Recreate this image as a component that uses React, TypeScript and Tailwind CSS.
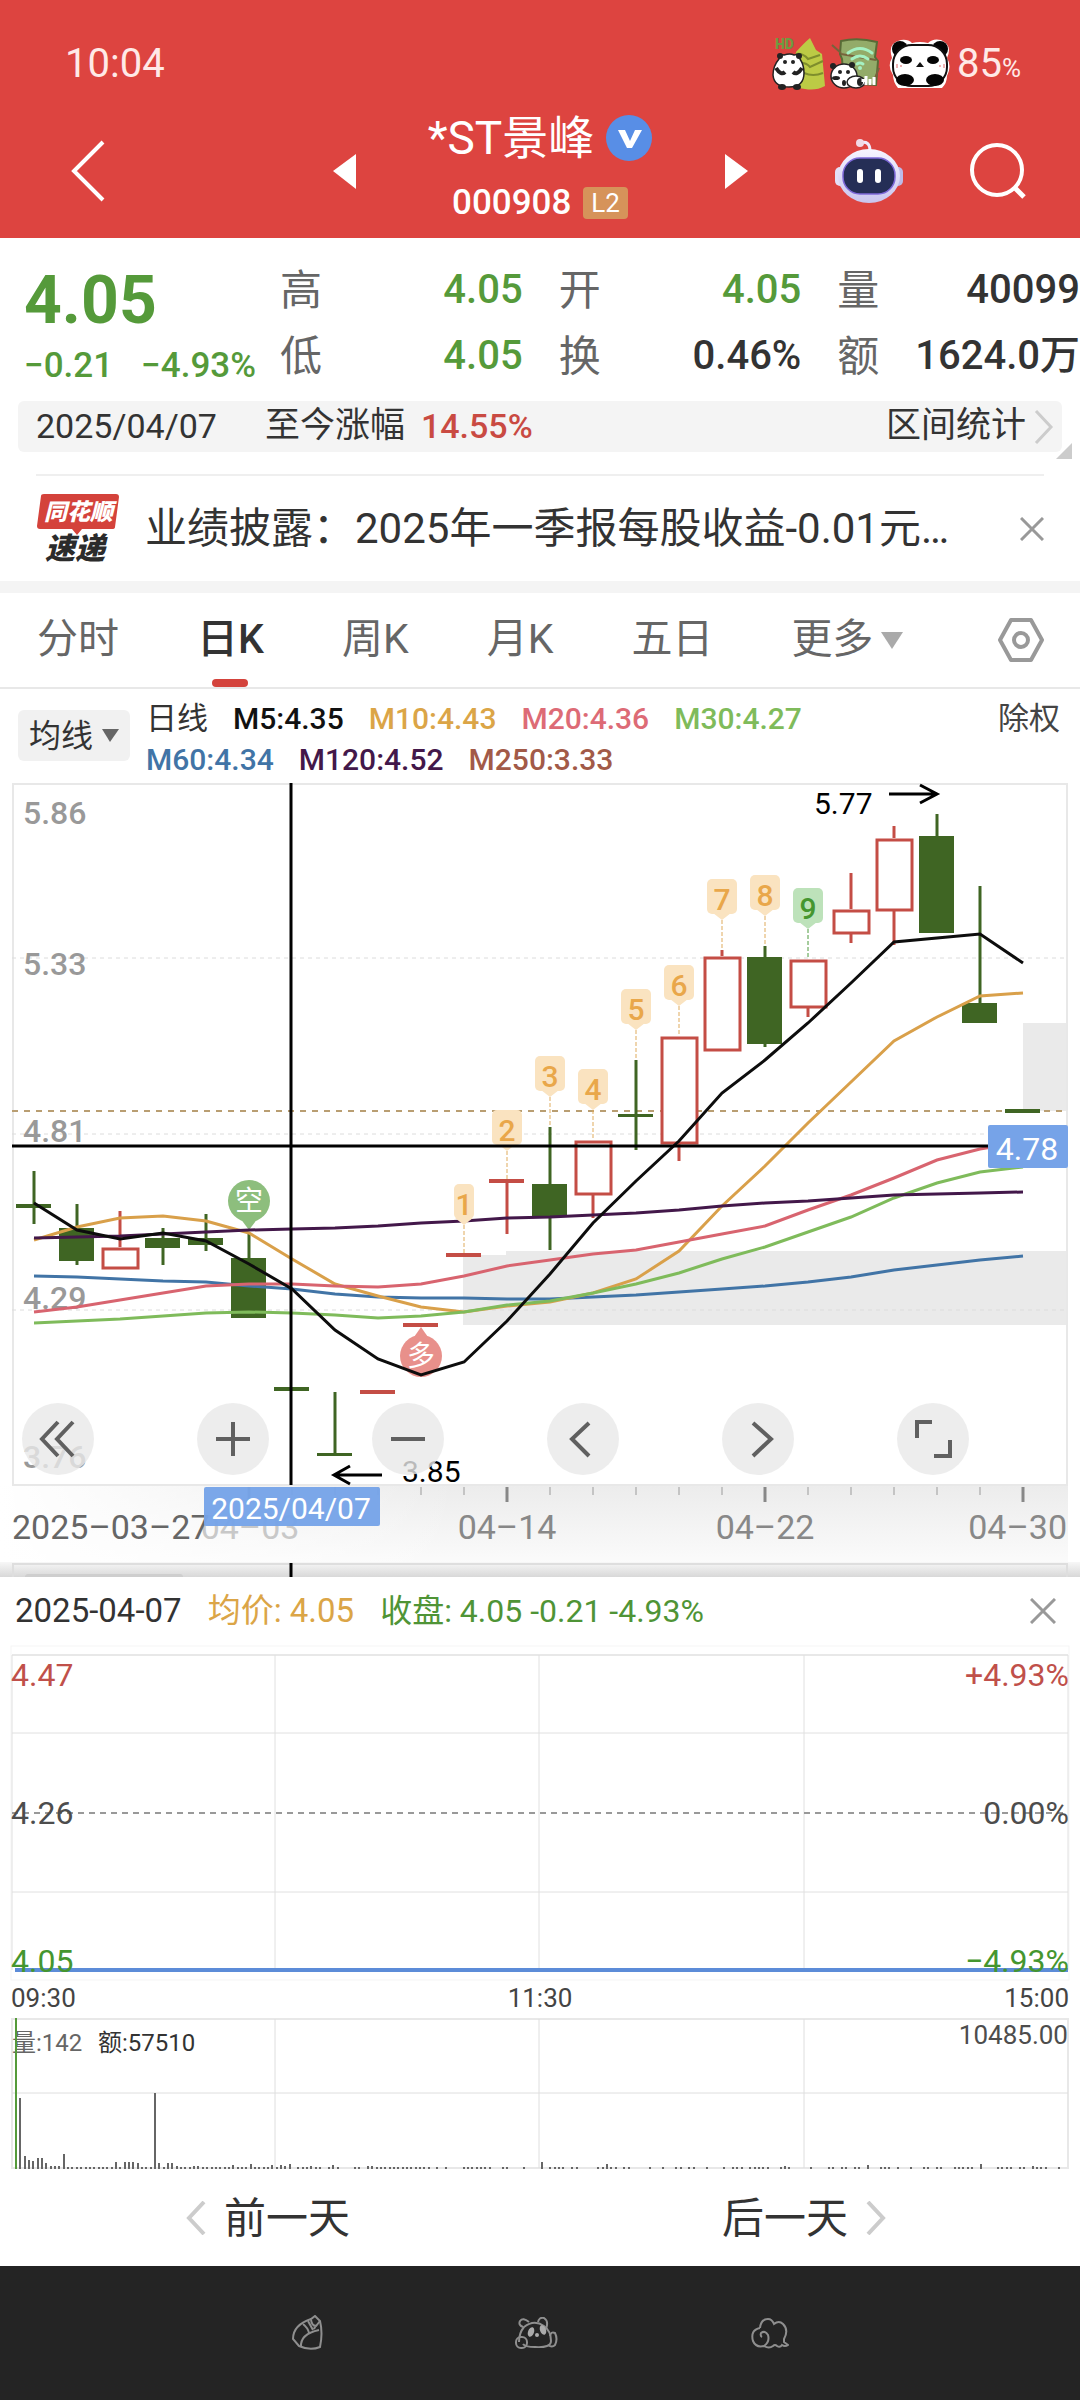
import { useState } from "react";

const candleX = (i: number) => 34 + Math.round(i * 43.02);

type Candle = { type: "down" | "up"; top: number; bottom: number; high?: number; low?: number };

const candles: Candle[] = [
  { type: "down", top: 1204, bottom: 1208, high: 1171, low: 1224 },
  { type: "down", top: 1228, bottom: 1261, high: 1204, low: 1265 },
  { type: "up", top: 1247, bottom: 1269, high: 1211 },
  { type: "down", top: 1238, bottom: 1248, high: 1228, low: 1265 },
  { type: "down", top: 1238, bottom: 1245, high: 1214, low: 1251 },
  { type: "down", top: 1258, bottom: 1318, high: 1233 },
  { type: "down", top: 1387, bottom: 1391 },
  { type: "down", top: 1453, bottom: 1456, high: 1392 },
  { type: "up", top: 1390, bottom: 1394 },
  { type: "up", top: 1323, bottom: 1327 },
  { type: "up", top: 1253, bottom: 1257 },
  { type: "up", top: 1179, bottom: 1183, low: 1234 },
  { type: "down", top: 1184, bottom: 1217, high: 1127, low: 1250 },
  { type: "up", top: 1140, bottom: 1195, low: 1218 },
  { type: "down", top: 1114, bottom: 1117, high: 1060, low: 1150 },
  { type: "up", top: 1036, bottom: 1144, low: 1161 },
  { type: "up", top: 956, bottom: 1051, high: 950 },
  { type: "down", top: 957, bottom: 1044, high: 946, low: 1047 },
  { type: "up", top: 959, bottom: 1008, low: 1017 },
  { type: "up", top: 909, bottom: 934, high: 873, low: 943 },
  { type: "up", top: 838, bottom: 911, high: 826, low: 945 },
  { type: "down", top: 836, bottom: 933, high: 814 },
  { type: "down", top: 1003, bottom: 1023, high: 886 },
  { type: "down", top: 1109, bottom: 1113 },
];

const averages = [
  {
    color: "#4174a6",
    values: [1276, 1277, 1279, 1281, 1282, 1286, 1289, 1294, 1297, 1298, 1298, 1299, 1299, 1297, 1295, 1292, 1289, 1286, 1282, 1277, 1270, 1265, 1260, 1256],
  },
  {
    color: "#d9a04a",
    values: [1240, 1227, 1218, 1216, 1221, 1233, 1259, 1284, 1296, 1307, 1312, 1306, 1302, 1293, 1279, 1251, 1206, 1166, 1123, 1082, 1041, 1017, 996, 993],
  },
  {
    color: "#d8646f",
    values: [1312, 1307, 1300, 1293, 1286, 1284, 1284, 1286, 1287, 1284, 1276, 1266, 1260, 1254, 1250, 1242, 1234, 1226, 1210, 1195, 1178, 1160, 1149, 1142],
  },
  {
    color: "#7fbb5b",
    values: [1323, 1321, 1319, 1316, 1313, 1312, 1313, 1315, 1318, 1316, 1312, 1305, 1301, 1293, 1284, 1273, 1259, 1247, 1232, 1217, 1198, 1183, 1172, 1167],
  },
  {
    color: "#43184a",
    values: [1238, 1237, 1236, 1234, 1232, 1230, 1229, 1228, 1226, 1223, 1221, 1218, 1217, 1215, 1213, 1210, 1206, 1203, 1201, 1198, 1195, 1194, 1193, 1192],
  },
  {
    color: "#0d0d0d",
    values: [1203, 1230, 1239, 1233, 1241, 1264, 1289, 1330, 1359, 1375, 1362, 1321, 1274, 1223, 1181, 1141, 1093, 1060, 1023, 983, 942, 938, 934, 963],
  },
];

// magic-nine counters: candle index and the price point they hang over
const counters = [
  { n: 1, i: 10, y: 1255 },
  { n: 2, i: 11, y: 1181 },
  { n: 3, i: 12, y: 1127 },
  { n: 4, i: 13, y: 1140 },
  { n: 5, i: 14, y: 1060 },
  { n: 6, i: 15, y: 1036 },
  { n: 7, i: 16, y: 950 },
  { n: 8, i: 17, y: 946 },
  { n: 9, i: 18, y: 959 },
];

const volumes = [
  0, 71, 13, 9, 8, 11, 11, 6, 3, 3, 3, 15, 2, 2, 2, 2, 2, 2, 2, 2, 2, 2, 2, 7, 2, 7, 7, 7, 6, 2, 2, 2, 76, 6, 2, 6, 6, 3, 2, 2,
  2, 3, 3, 2, 2, 2, 2, 2, 2, 2, 4, 2, 2, 2, 5, 2, 2, 2, 2, 4, 2, 4, 3, 5, 0, 2, 2, 2, 3, 2, 2, 0, 2, 4, 2, 0, 0, 0, 2, 2,
  0, 3, 3, 2, 2, 2, 2, 2, 2, 2, 2, 2, 2, 2, 2, 2, 0, 2, 0, 2, 0, 0, 0, 2, 2, 2, 2, 2, 2, 2, 0, 0, 2, 2, 0, 0, 0, 2, 0, 0,
  0, 7, 0, 2, 2, 2, 2, 0, 2, 2, 0, 0, 0, 0, 2, 2, 5, 2, 2, 0, 2, 2, 0, 0, 0, 0, 2, 0, 0, 2, 0, 0, 2, 2, 0, 2, 2, 0, 0, 2,
  0, 0, 0, 2, 0, 2, 2, 2, 0, 2, 2, 2, 2, 2, 0, 0, 2, 3, 2, 0, 0, 0, 0, 2, 0, 0, 0, 2, 2, 0, 2, 2, 0, 2, 2, 0, 4, 0, 0, 2,
  2, 2, 0, 2, 0, 0, 2, 0, 0, 2, 2, 0, 2, 2, 0, 0, 2, 2, 2, 2, 2, 0, 5, 0, 0, 0, 2, 2, 2, 2, 0, 2, 2, 0, 3, 2, 2, 2, 0, 0,
  2,
];

const tabs = ["分时", "日K", "周K", "月K", "五日"];

function StatusBar() {
  return (
    <div className="flex h-24 items-center pt-8 pr-[59px] pl-[65px] text-[#ffe9e7]">
      <span className="flex-1 text-[40px]">10:04</span>
      <svg viewBox="0 0 54 54" className="mr-[3px] h-[54px] w-[54px]">
        <path d="M20 50 24 15q8-9 14-14l6 12 6 4 3 32q-9 5-20 3z" fill="#bccb45" />
        <path d="M24 17q7-1 12 5l12-4M25 27q8-3 13 3l13-6M32 36q9 4 19 0" fill="none" stroke="#7e8e2c" strokeWidth="2" />
        <text x="3" y="12" fontSize="14" fontWeight="900" fill="#6f9a40">HD</text>
        <path d="M7 22q-1-6 5-4 6-2 10 0 6-2 6 4 4 6 4 14 0 14-15 14T1 38q0-9 6-16z" fill="#fff" stroke="#222" strokeWidth="1.5" />
        <circle cx="8" cy="19" r="3" fill="#222" />
        <circle cx="27" cy="19" r="3" fill="#222" />
        <circle cx="13" cy="25" r="2" fill="#222" />
        <circle cx="21" cy="25" r="2" fill="#222" />
        <path d="M4 31q5 8 9 4M30 31q-5 8-9 4" fill="none" stroke="#222" strokeWidth="4" />
        <ellipse cx="10" cy="50" rx="4" ry="3" fill="#222" />
        <ellipse cx="25" cy="50" rx="4" ry="3" fill="#222" />
      </svg>
      <svg viewBox="0 0 54 54" className="mr-[5px] h-[54px] w-[54px]">
        <path d="M12 4q17-4 36 1l-2 15 3 4-2 24-32-2-2-24-2-5z" fill="#93ab69" stroke="#596b36" strokeWidth="2" />
        <path d="m12 17 35 6M3 8l9 8M50 31l-4 10" stroke="#77623c" strokeWidth="2" />
        <path d="M19 16q12-9 24 0M23 22q8-6 16 0M28 27q3-2 6 0" fill="none" stroke="#a5f1c2" strokeWidth="3" strokeLinecap="round" />
        <circle cx="31" cy="31" r="2" fill="#a5f1c2" />
        <ellipse cx="15" cy="39" rx="13" ry="12" fill="#fff" stroke="#222" strokeWidth="1.5" />
        <ellipse cx="27" cy="45" rx="9" ry="6" fill="#fff" stroke="#222" strokeWidth="1.5" />
        <circle cx="4" cy="29" r="3" fill="#222" />
        <circle cx="23" cy="28" r="3" fill="#222" />
        <circle cx="11" cy="35" r="2" fill="#222" />
        <circle cx="19" cy="35" r="2" fill="#222" />
        <ellipse cx="7" cy="41" rx="4" ry="2" fill="#222" />
        <ellipse cx="15" cy="46" rx="2" ry="3" fill="#222" />
        <ellipse cx="31" cy="45" rx="3" ry="4" fill="#222" />
        <path d="M37 39v9M34 42v3M41 42v6M45 40v8" stroke="#fff" strokeWidth="3" />
      </svg>
      <svg viewBox="0 0 64 52" className="mr-[5px] h-[52px] w-16">
        <path d="M10 50Q5 44 5 37-1 28 4 20-1 5 13 2q7-1 11 3 8-2 16 0 5-5 13-3 12 5 6 18 5 8 0 18 0 7-5 12z" fill="#fff" />
        <circle cx="12" cy="11" r="8" fill="#050505" />
        <circle cx="52" cy="11" r="8" fill="#050505" />
        <rect x="5" y="7" width="54" height="41" rx="19" fill="#fff" stroke="#111" strokeWidth="2" />
        <ellipse cx="18" cy="22" rx="6" ry="4" fill="#050505" />
        <ellipse cx="45" cy="22" rx="6" ry="4" fill="#050505" />
        <path d="m32 24-4 5h8z" fill="#111" />
        <ellipse cx="17" cy="42" rx="9" ry="6" fill="#050505" />
        <ellipse cx="47" cy="42" rx="9" ry="6" fill="#050505" />
        <path d="M9 26v4M13 27v2M52 27v2M56 26v4" stroke="#d66" strokeWidth="1" />
      </svg>
      <span className="text-[40px]">
        85<span className="text-[26px]">%</span>
      </span>
    </div>
  );
}

function TitleBar() {
  return (
    <div className="grid h-[142px] grid-cols-[1fr_auto_1fr] items-center pt-2">
      <button aria-label="返回" className="justify-self-start pl-[70px]">
        <svg viewBox="0 0 36 62" className="h-[62px] w-9" fill="none" stroke="#fff" strokeWidth="4">
          <path d="M33 2 4 31l29 29" />
        </svg>
      </button>
      <div className="flex items-center">
        <button aria-label="上一只">
          <svg viewBox="0 0 23 35" className="h-[35px] w-[23px]" fill="#fff">
            <path d="M23 0v35L0 17z" />
          </svg>
        </button>
        <div className="w-[369px] text-center text-white">
          <h1 className="flex h-16 items-center justify-center gap-3 text-[46px]">
            <span>*ST景峰</span>
            <svg viewBox="0 0 46 46" className="h-[46px] w-[46px]">
              <circle cx="23" cy="23" r="23" fill="#588ee6" />
              <path d="M12 15h7l5 11 5-11h7L26 33h-5z" fill="#fff" />
            </svg>
          </h1>
          <p className="flex h-[66px] items-center justify-center gap-3 text-[35px] font-medium">
            000908
            <span className="rounded-sm bg-[#d6935a] px-2 text-[26px] leading-8 font-normal">L2</span>
          </p>
        </div>
        <button aria-label="下一只">
          <svg viewBox="0 0 23 35" className="h-[35px] w-[23px]" fill="#fff">
            <path d="M0 0v35l23-18z" />
          </svg>
        </button>
      </div>
      <div className="flex items-center justify-end gap-[66px] pr-[53px]">
        <button aria-label="智能助手">
          <svg viewBox="0 0 68 64" className="h-16 w-[68px]">
            <defs>
              <linearGradient id="shell" x1="0" y1="0" x2="0" y2="1">
                <stop offset="0" stopColor="#f6f4ff" />
                <stop offset="1" stopColor="#c9c5ee" />
              </linearGradient>
            </defs>
            <path d="M25 4q10-3 10 8" fill="none" stroke="#efeafc" strokeWidth="3" />
            <circle cx="25" cy="4" r="4" fill="#f1d9e6" />
            <rect x="0" y="28" width="10" height="19" rx="5" fill="#e3e0f7" />
            <rect x="58" y="28" width="10" height="19" rx="5" fill="#bdbbe9" />
            <ellipse cx="34" cy="37" rx="31" ry="27" fill="url(#shell)" />
            <rect x="8" y="19" width="52" height="36" rx="17" fill="#252e56" stroke="#7d68d8" strokeWidth="1.5" />
            <rect x="22" y="30" width="6" height="14" rx="3" fill="#fff" />
            <rect x="40" y="30" width="6" height="14" rx="3" fill="#fff" />
          </svg>
        </button>
        <button aria-label="搜索">
          <svg viewBox="0 0 58 58" className="h-[58px] w-[58px]" fill="none" stroke="#fff" strokeWidth="4">
            <circle cx="28" cy="28" r="25" />
            <path d="m46 46 9 9" strokeWidth="5" />
          </svg>
        </button>
      </div>
    </div>
  );
}

function Quote({ label, value, tone }: { label: string; value: string; tone: string }) {
  return (
    <div className="flex h-[66px] items-center justify-between whitespace-nowrap">
      <dt className="text-[42px] text-[#666]">{label}</dt>
      <dd className={`text-[40px] font-medium ${tone}`}>{value}</dd>
    </div>
  );
}

function QuoteSummary() {
  const green = "text-[#559a3a]";
  const dark = "text-[#333]";
  return (
    <section className="flex pt-[19px] pb-3">
      <div className="w-[280px] shrink-0 pl-6 whitespace-nowrap text-[#559a3a]">
        <p className="text-[66px] leading-[88px] font-bold">4.05</p>
        <p className="flex gap-7 text-[35px] leading-[42px] font-medium">
          <span>−0.21</span>
          <span>−4.93%</span>
        </p>
      </div>
      <dl className="grid flex-1 grid-cols-3 gap-x-9">
        <Quote label="高" value="4.05" tone={green} />
        <Quote label="开" value="4.05" tone={green} />
        <Quote label="量" value="40099" tone={dark} />
        <Quote label="低" value="4.05" tone={green} />
        <Quote label="换" value="0.46%" tone={dark} />
        <Quote label="额" value="1624.0万" tone={dark} />
      </dl>
    </section>
  );
}

function News() {
  return (
    <section className="mx-9 mt-[22px] flex h-[107px] items-center border-t-2 border-[#efefef]">
      <svg viewBox="0 0 84 80" className="h-20 w-[84px] shrink-0" fontWeight="900" fontStyle="italic">
        <path d="M8 5h72q3 0 3 3l-4 30q0 2-3 2H46l-5 6-5-6H4q-3 0-3-3L5 7q0-2 3-2z" fill="#d4423b" />
        <text x="8" y="31" fontSize="23" fill="#fff">同花顺</text>
        <text x="9" y="70" fontSize="30" fill="#2b2b2b">速递</text>
      </svg>
      <a href="#news" className="ml-[25px] flex-1 truncate text-[42px] text-[#333]">
        业绩披露：2025年一季报每股收益-0.01元…
      </a>
      <button aria-label="关闭公告">
        <svg viewBox="0 0 24 24" className="h-6 w-6" stroke="#999" strokeWidth="3">
          <path d="m1 1 22 22M23 1 1 23" />
        </svg>
      </button>
    </section>
  );
}

function PeriodTabs() {
  const [active, setActive] = useState("日K");
  return (
    <nav className="flex h-24 items-center border-b-2 border-[#e8e8e8] pr-9 pl-[37px] text-[41px] text-[#666]">
      <div className="flex h-full flex-1 gap-[78px] whitespace-nowrap">
        {tabs.map((tab) => (
          <button
            key={tab}
            onClick={() => setActive(tab)}
            className={tab === active ? "relative h-full font-medium text-[#333]" : "h-full"}
          >
            {tab}
            {tab === active && (
              <span className="absolute bottom-0 left-1/2 h-2 w-9 -translate-x-1/2 rounded-full bg-[#d4433c]" />
            )}
          </button>
        ))}
        <button className="flex items-center gap-2">
          更多
          <svg viewBox="0 0 22 17" className="h-[17px] w-[22px]" fill="#aaa">
            <path d="M0 0h22L11 17z" />
          </svg>
        </button>
      </div>
      <button aria-label="设置">
        <svg viewBox="0 0 46 46" className="h-[46px] w-[46px]" fill="none" stroke="#999" strokeWidth="4" strokeLinejoin="round">
          <path d="M13 3h20l11 20-11 20H13L2 23z" />
          <circle cx="23" cy="23" r="7" />
        </svg>
      </button>
    </nav>
  );
}

function AverageLegend() {
  return (
    <section className="flex h-[91px] items-start justify-between pr-5 pl-[18px] text-[30px] font-medium whitespace-nowrap">
      <button className="mt-[21px] flex h-[51px] items-center gap-[9px] rounded-md bg-[#f1f1f1] px-[11px] text-[32px] font-normal text-[#333]">
        均线
        <svg viewBox="0 0 17 13" className="h-[13px] w-[17px]" fill="#666">
          <path d="M0 0h17L8 13z" />
        </svg>
      </button>
      <div className="mt-[9px] ml-4 flex-1 leading-[41px]">
        <p className="flex gap-[25px]">
          <span className="text-[31px] font-normal text-[#333]">日线</span>
          <span className="text-[#111]">M5:4.35</span>
          <span className="text-[#dba547]">M10:4.43</span>
          <span className="text-[#dd6b76]">M20:4.36</span>
          <span className="text-[#7fbb5b]">M30:4.27</span>
        </p>
        <p className="flex gap-[25px]">
          <span className="text-[#4174a6]">M60:4.34</span>
          <span className="text-[#43184a]">M120:4.52</span>
          <span className="text-[#a25a48]">M250:3.33</span>
        </p>
      </div>
      <button className="mt-[9px] text-[31px] leading-[41px] font-normal text-[#444]">除权</button>
    </section>
  );
}

function CandleShape({ candle, x }: { candle: Candle; x: number }) {
  const { type, top, bottom, high, low } = candle;
  const color = type === "down" ? "#3f6523" : "#c44d45";
  const hollow = type === "up" && bottom - top > 6;
  return (
    <g stroke={color} strokeWidth="3">
      {high && <path d={`M${x} ${high}V${top}`} />}
      {low && <path d={`M${x} ${bottom}V${low}`} />}
      {hollow ? (
        <rect x={x - 17} y={top + 2} width="35" height={bottom - top - 3} fill="#fff" />
      ) : (
        <rect x={x - 18} y={top} width="35" height={bottom - top} fill={color} stroke="none" />
      )}
    </g>
  );
}

function KLineChart() {
  return (
    <section className="relative">
      <svg viewBox="0 780 1080 797" className="block w-full">
        <defs>
          <linearGradient id="shade" x1="0" y1="0" x2="0" y2="1">
            <stop offset="0" stopColor="#ececec" />
            <stop offset="1" stopColor="#fbfbfb" />
          </linearGradient>
          <linearGradient id="fade" x1="0" y1="0" x2="1" y2="0">
            <stop offset="0" stopColor="#fff" />
            <stop offset="1" stopColor="#fff" stopOpacity="0" />
          </linearGradient>
          <linearGradient id="edge" x1="0" y1="0" x2="0" y2="1">
            <stop offset="0" stopColor="#f7f7f7" />
            <stop offset="1" stopColor="#d8d8d8" />
          </linearGradient>
        </defs>

        <rect x="0" y="1486" width="1068" height="78" fill="url(#shade)" />
        <rect x="0" y="1486" width="460" height="78" fill="url(#fade)" />
        <rect x="0" y="1562" width="1080" height="15" fill="url(#edge)" />
        <rect x="25" y="1574" width="158" height="6" rx="3" fill="#cecece" />
        <path d="M13 1577v-13h1054v13" fill="none" stroke="#dedede" strokeWidth="2" />
        <path d="M463 1255h43v-4h562v74H463zM1023 1023h45v88h-45z" fill="#eaeaea" />
        <rect x="13" y="784" width="1054" height="701" fill="none" stroke="#e8e8e8" strokeWidth="2" />
        <path d="M12 958h1056M12 1134h1056M12 1310h1056" stroke="#dcdcdc" strokeDasharray="4 4" />
        <path d="M12 1111h1056" stroke="#b99e72" strokeWidth="2" strokeDasharray="6 6" />

        {candles.map((candle, i) => (
          <CandleShape key={i} candle={candle} x={candleX(i)} />
        ))}

        <g fontSize="32" fontWeight="500" fill="#999">
          <text x="23" y="824">5.86</text>
          <text x="23" y="975">5.33</text>
          <text x="23" y="1142">4.81</text>
          <text x="23" y="1309">4.29</text>
          <text x="23" y="1468">3.76</text>
        </g>

        <g fill="#8dbe7d">
          <path d="m240 1218 9 12 9-12z" />
          <circle cx="249" cy="1201" r="21" />
        </g>
        <text x="249" y="1211" fontSize="28" fill="#fff" textAnchor="middle">空</text>
        <g fill="#e8908b">
          <path d="m412 1340 9-13 9 13z" />
          <circle cx="421" cy="1356" r="21" />
        </g>
        <text x="421" y="1366" fontSize="28" fill="#fff" textAnchor="middle">多</text>

        {averages.map(({ color, values }) => (
          <polyline
            key={color}
            points={values.map((y, i) => `${candleX(i)},${y}`).join(" ")}
            fill="none"
            stroke={color}
            strokeWidth="3"
          />
        ))}

        {counters.map(({ n, i, y }) => {
          const x = candleX(i);
          const half = n === 1 ? 10 : 15;
          const last = n === 9;
          return (
            <g key={n}>
              <path d={`M${x} ${y - 30}V${y}`} stroke={last ? "#4c9a3c" : "#dfab5c"} strokeDasharray="4 2" />
              <g fill={last ? "#bde2ba" : "#fae3c0"}>
                <rect x={x - half} y={y - 71} width={half * 2} height="35" rx="5" />
                <path d={`M${x - 9} ${y - 37}h18l-9 7z`} />
              </g>
              <text x={x} y={y - 40} fontSize="30" fontWeight="500" textAnchor="middle" fill={last ? "#45962f" : "#e9a74a"}>
                {n}
              </text>
            </g>
          );
        })}

        <g fontSize="30" fill="#000">
          <text x="814" y="814">5.77</text>
          <text x="402" y="1482">3.85</text>
        </g>
        <path d="M889 794h47M920 785l17 9-17 9M382 1475h-47M350 1466l-16 9 16 9" fill="none" stroke="#000" strokeWidth="3" />

        {candles.map((_, i) => {
          if (i < 5) return null;
          const major = (i - 5) % 6 === 0;
          return (
            <path
              key={i}
              d={`M${candleX(i)} 1487v${major ? 15 : 8}`}
              stroke={major ? "#888" : "#c4c4c4"}
              strokeWidth={major ? 3 : 2}
            />
          );
        })}
        <g fontSize="34" fill="#888">
          <text x="250" y="1539" textAnchor="middle" fill="#c8c8c8">04–03</text>
          <text x="507" y="1539" textAnchor="middle">04–14</text>
          <text x="765" y="1539" textAnchor="middle">04–22</text>
          <text x="1067" y="1539" textAnchor="end">04–30</text>
          <text x="12" y="1539" fill="#666">2025–03–27</text>
        </g>

        <path d="M12 1146h1056M291 783v702M291 1563v14" stroke="#000" strokeWidth="3" />
        <rect x="988" y="1125" width="80" height="43" rx="2" fill="#76a3e8" />
        <text x="1027" y="1160" fontSize="32" fill="#fff" textAnchor="middle">4.78</text>
        <rect x="204" y="1487" width="176" height="39" rx="2" fill="#76a3e8" fillOpacity="0.96" />
        <text x="291" y="1519" fontSize="30" fill="#fff" textAnchor="middle">2025/04/07</text>
      </svg>
      <div className="absolute inset-x-0 bottom-[102px] flex justify-between pr-[111px] pl-[22px]">
        <ChartButton label="展开" path="M36 19 20 36l16 17M51 19 35 36l16 17" />
        <ChartButton label="放大" path="M36 19v34M19 36h34" />
        <ChartButton label="缩小" path="M19 36h34" />
        <ChartButton label="左移" path="M42 20 25 36l17 17" />
        <ChartButton label="右移" path="m31 20 18 16-18 17" />
        <ChartButton label="全屏" path="M20 35V19h15M37 53h16V37" />
      </div>
    </section>
  );
}

function ChartButton({ label, path }: { label: string; path: string }) {
  return (
    <button aria-label={label} className="h-[72px] w-[72px] rounded-full bg-[#e9e9e9]/80">
      <svg viewBox="0 0 72 72" fill="none" stroke="#606060" strokeWidth="4">
        <path d={path} />
      </svg>
    </button>
  );
}

function DayPanel() {
  return (
    <section className="bg-white">
      <header className="flex h-[68px] items-center gap-[26px] pr-6 pl-[15px] text-[33px] whitespace-nowrap">
        <span className="text-[#333]">2025-04-07</span>
        <span className="text-[#dba547]">均价: 4.05</span>
        <span className="flex-1 text-[32px] text-[#4f9436]">收盘: 4.05 -0.21 -4.93%</span>
        <button aria-label="关闭">
          <svg viewBox="0 0 26 26" className="h-[26px] w-[26px]" stroke="#999" strokeWidth="3">
            <path d="m1 1 24 24M25 1 1 25" />
          </svg>
        </button>
      </header>
      <svg viewBox="0 1645 1080 339" className="block w-full">
        <rect x="11" y="1646" width="1058" height="334" fill="none" stroke="#f5f5f5" />
        <path d="M12 1655h1056" stroke="#e8e8e8" strokeWidth="2" />
        <path d="M12 1655v315M275 1655v315M539 1655v315M804 1655v315M1068 1655v315M12 1733h1056M12 1892h1056" stroke="#e0e0e0" />
        <path d="M12 1813h1056" stroke="#999" strokeWidth="2" strokeDasharray="6 5" />
        <path d="M15 1970h1053" stroke="#5c8cd8" strokeWidth="4" />
        <g fontSize="32">
          <text x="11" y="1686" fill="#c0504a">4.47</text>
          <text x="11" y="1824" fill="#4d4d4d">4.26</text>
          <text x="11" y="1972" fill="#45962f">4.05</text>
          <g textAnchor="end">
            <text x="1069" y="1686" fill="#c0504a">+4.93%</text>
            <text x="1069" y="1824" fill="#4d4d4d">0.00%</text>
            <text x="1069" y="1972" fill="#45962f">−4.93%</text>
          </g>
        </g>
      </svg>
      <div className="flex h-7 items-center justify-between px-[11px] text-[26px] text-[#444]">
        <span>09:30</span>
        <span>11:30</span>
        <span>15:00</span>
      </div>
      <svg viewBox="0 2012 1080 158" className="block w-full">
        <rect x="12" y="2019" width="1056" height="149" fill="none" stroke="#e8e8e8" strokeWidth="2" />
        <path d="M275 2019v149M539 2019v149M804 2019v149M12 2093h1056" stroke="#dedede" />
        {volumes.map((v, i) =>
          v > 0 ? <rect key={i} x={Math.round(15 + i * 4.345)} y={2169 - v} width="2" height={v} fill="#666" /> : null
        )}
        <text x="12" y="2051" fontSize="24" fill="#666">量:142</text>
        <text x="98" y="2051" fontSize="24" fill="#333">额:57510</text>
        <text x="1068" y="2044" fontSize="26" fill="#4d4d4d" textAnchor="end">10485.00</text>
        <path d="M16 2018v151" stroke="#559a3a" strokeWidth="2" />
      </svg>
      <div className="grid h-24 grid-cols-2 pr-2 text-[42px] text-[#333]">
        <button className="flex items-center justify-center gap-[18px]">
          <svg viewBox="0 0 20 34" className="h-[34px] w-5" fill="none" stroke="#ccc" strokeWidth="4">
            <path d="M18 1 3 17l15 16" />
          </svg>
          前一天
        </button>
        <button className="flex items-center justify-center gap-[18px]">
          后一天
          <svg viewBox="0 0 20 34" className="h-[34px] w-5" fill="none" stroke="#ccc" strokeWidth="4">
            <path d="m2 1 15 16L2 33" />
          </svg>
        </button>
      </div>
    </section>
  );
}

function SystemNav() {
  return (
    <nav className="flex h-[134px] items-center justify-center gap-48 bg-[#242424]">
      <button aria-label="最近任务">
        <svg viewBox="0 0 32 36" className="h-9 w-8" fill="none" stroke="#8f8f8f" strokeWidth="2">
          <path d="M8 31 2 24Q2 10 20 4l4-3 5 5q3 12 0 26-10 4-21-1z" />
          <path d="M10 32q-1-13 18-17M12 9q5 4 6 9M17 6l5 9M20 5q1 6 5 6l4-5M23 14l2-4" />
        </svg>
      </button>
      <button aria-label="主屏幕">
        <svg viewBox="0 0 44 32" className="h-8 w-11" fill="none" stroke="#8f8f8f" strokeWidth="2">
          <path d="M8 27q2 3 12 3 16 1 16-6 0-10-7-15-10-7-20 1-5 6-5 15" />
          <path d="M8 10Q3 8 5 4q3-4 9 1M23 5q1-5 6-4 5 3 2 11M35 19q1-5 5-3 3 6 0 12-3 3-7 0" />
          <rect x="1" y="20" width="11" height="11" rx="5" />
          <ellipse cx="16" cy="15" rx="3" ry="5" transform="rotate(20 16 15)" fill="#aaa" stroke="none" />
          <ellipse cx="28" cy="13" rx="3" ry="5" transform="rotate(-20 28 13)" fill="#aaa" stroke="none" />
          <circle cx="22" cy="18" r="2" fill="#aaa" stroke="none" />
        </svg>
      </button>
      <button aria-label="返回上级">
        <svg viewBox="0 0 38 32" className="h-8 w-[38px]" fill="none" stroke="#8f8f8f" strokeWidth="2">
          <path d="M9 11q1-9 8-9 4 0 6 5 5-4 9 0 6 6 1 15v3l4 3q-3 2-6 0-2 3-5 1-2-2-4 0-4 3-9 0Q5 31 2 24q-3-11 7-13" />
          <path d="M13 29q6-4 4-11-3-5-7-2-1 3 1 4" />
        </svg>
      </button>
    </nav>
  );
}

export default function App() {
  return (
    <main className="min-h-screen bg-white font-[Roboto,'Noto_Sans_CJK_SC',sans-serif]">
      <header className="bg-[#dd4440]">
        <StatusBar />
        <TitleBar />
      </header>
      <QuoteSummary />
      <section className="relative mx-[18px] flex h-[51px] items-center rounded-md bg-[#f4f4f4] pl-[18px] text-[34px] text-[#333]">
        <span>2025/04/07</span>
        <span className="ml-12 text-[35px]">至今涨幅</span>
        <span className="ml-4 flex-1 font-medium text-[#c94a42]">14.55%</span>
        <button className="flex items-center gap-2 pr-2 text-[35px]">
          区间统计
          <svg viewBox="0 0 20 34" className="h-[34px] w-5" fill="none" stroke="#ccc" strokeWidth="3">
            <path d="m2 1 15 16L2 33" />
          </svg>
        </button>
        <svg viewBox="0 0 16 16" className="absolute top-[42px] -right-[10px] h-4 w-4" fill="#ccc">
          <path d="M16 0v16H0z" />
        </svg>
      </section>
      <News />
      <div className="h-3 bg-[#f4f4f4]" />
      <PeriodTabs />
      <AverageLegend />
      <KLineChart />
      <DayPanel />
      <SystemNav />
    </main>
  );
}
